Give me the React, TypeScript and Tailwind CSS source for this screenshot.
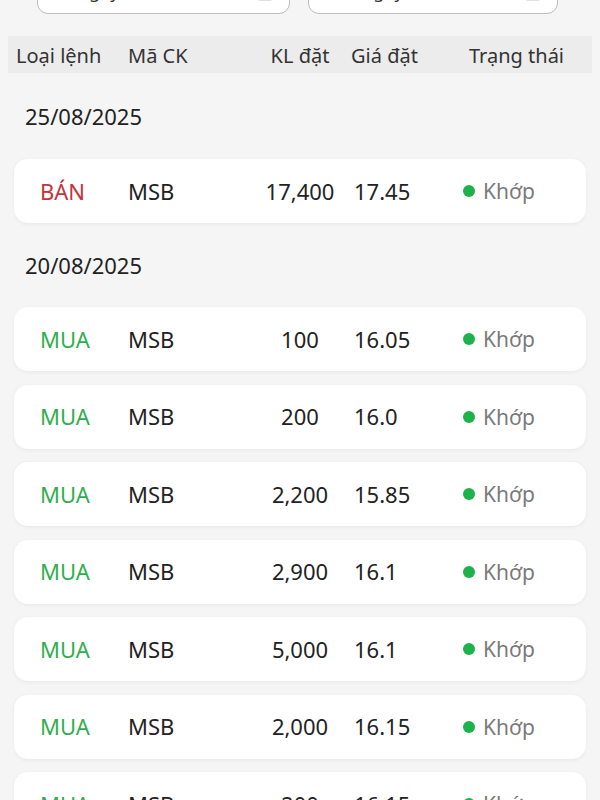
import { Calendar } from "lucide-react";

type Order = {
  side: "MUA" | "BÁN";
  code: string;
  qty: string;
  price: string;
  status: string;
};

const groups: { date: string; orders: Order[] }[] = [
  {
    date: "25/08/2025",
    orders: [{ side: "BÁN", code: "MSB", qty: "17,400", price: "17.45", status: "Khớp" }],
  },
  {
    date: "20/08/2025",
    orders: [
      { side: "MUA", code: "MSB", qty: "100", price: "16.05", status: "Khớp" },
      { side: "MUA", code: "MSB", qty: "200", price: "16.0", status: "Khớp" },
      { side: "MUA", code: "MSB", qty: "2,200", price: "15.85", status: "Khớp" },
      { side: "MUA", code: "MSB", qty: "2,900", price: "16.1", status: "Khớp" },
      { side: "MUA", code: "MSB", qty: "5,000", price: "16.1", status: "Khớp" },
      { side: "MUA", code: "MSB", qty: "2,000", price: "16.15", status: "Khớp" },
      { side: "MUA", code: "MSB", qty: "200", price: "16.15", status: "Khớp" },
    ],
  },
];

const OrderCard: React.FC<{ order: Order }> = ({ order }) => {
  return (
    <div className="mx-[14px] h-[64px] shrink-0 rounded-[14px] bg-white shadow-[0_1px_4px_rgba(0,0,0,0.06)] flex items-center pl-[26px] text-[22px] text-[#222]">
      <div
        className={
          order.side === "MUA" ? "w-[88px] text-[#2fae4e]" : "w-[88px] text-[#c4333b]"
        }
      >
        {order.side}
      </div>
      <div className="w-[122px]">{order.code}</div>
      <div className="w-[100px] text-center">{order.qty}</div>
      <div className="w-[4px]" />
      <div className="w-[109px]">{order.price}</div>
      <div className="flex items-center gap-[8px]">
        <span className="w-[12px] h-[12px] rounded-full bg-[#1fb24a]" />
        <span className="text-[21px] text-[#7a7a7a] translate-y-[1px]">{order.status}</span>
      </div>
    </div>
  );
};

export default function App() {
  return (
    <div
      className="w-[600px] h-[800px] overflow-hidden bg-[#f5f5f5] flex flex-col"
      style={{ fontFamily: '"Noto Sans", "Open Sans", sans-serif' }}
    >
      <div className="flex shrink-0 -mt-[32px] pl-[37px] gap-[18px]">
        <div className="w-[253px] h-[46px] rounded-[11px] border-[1.5px] border-[#bdbdbd] bg-white flex items-center justify-between px-[14px] text-[18px] text-[#333]">
          <span>Từ ngày</span>
          <Calendar className="w-[20px] h-[20px] text-[#888]" />
        </div>
        <div className="w-[250px] h-[46px] rounded-[11px] border-[1.5px] border-[#bdbdbd] bg-white flex items-center justify-between px-[14px] text-[18px] text-[#333]">
          <span>Đến ngày</span>
          <Calendar className="w-[20px] h-[20px] text-[#888]" />
        </div>
      </div>

      <div className="mt-[22px] mx-[8px] h-[37px] shrink-0 bg-[#ececec] flex items-center pt-[3px] text-[20px] text-[#333]">
        <div className="w-[120px] pl-[8px]">Loại lệnh</div>
        <div className="w-[122px]">Mã CK</div>
        <div className="w-[100px] text-center">KL đặt</div>
        <div className="w-[1px]" />
        <div className="w-[118px]">Giá đặt</div>
        <div>Trạng thái</div>
      </div>

      {groups.map((g, gi) => (
        <div key={g.date} className="flex flex-col shrink-0">
          <div
            className={
              gi === 0
                ? "pl-[25px] pt-[28px] pb-[28px] leading-[30px] text-[22px] text-[#222]"
                : "pl-[25px] pt-[27px] pb-[27px] leading-[30px] text-[22px] text-[#222]"
            }
          >
            {g.date}
          </div>
          <div className="flex flex-col gap-[13.5px]">
            {g.orders.map((o, i) => (
              <OrderCard key={i} order={o} />
            ))}
          </div>
        </div>
      ))}
    </div>
  );
}
